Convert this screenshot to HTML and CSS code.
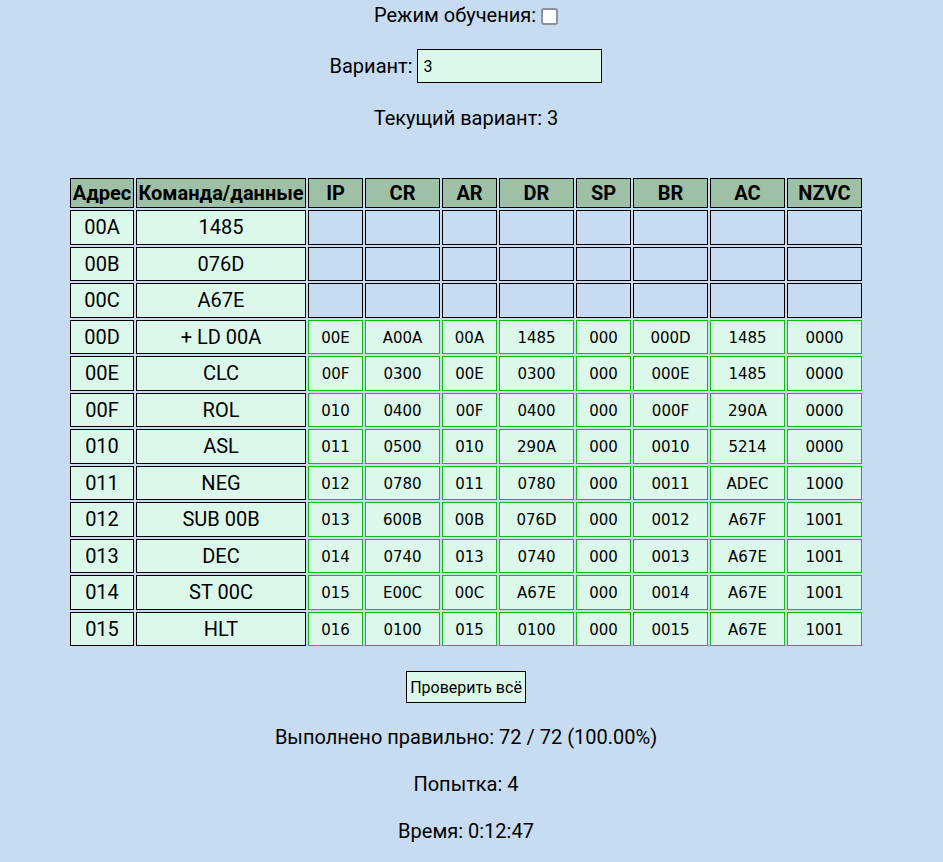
FILE: index.html
```html
<!DOCTYPE html>
<html lang="ru">
<head>
<meta charset="utf-8">
<title>БЭВМ</title>
<link rel="stylesheet" href="styles.css">
</head>
<body>
<div class="page">
  <p class="line mode">Режим обучения: <input type="checkbox" class="check"></p>
  <p class="line variant">Вариант: <input type="text" class="variant-input" value="3"></p>
  <p class="line current">Текущий вариант: 3</p>

  <table class="trace">
    <thead>
      <tr>
        <th><div class="h w-addr">Адрес</div></th>
        <th><div class="h w-cmd">Команда/данные</div></th>
        <th><div class="h w-s">IP</div></th>
        <th><div class="h w-l">CR</div></th>
        <th><div class="h w-s">AR</div></th>
        <th><div class="h w-l">DR</div></th>
        <th><div class="h w-s">SP</div></th>
        <th><div class="h w-l">BR</div></th>
        <th><div class="h w-l">AC</div></th>
        <th><div class="h w-l">NZVC</div></th>
      </tr>
    </thead>
    <tbody>
      <tr>
        <td class="txt"><div class="c">00A</div></td>
        <td class="txt"><div class="c">1485</div></td>
        <td class="empty"><div class="c"></div></td>
        <td class="empty"><div class="c"></div></td>
        <td class="empty"><div class="c"></div></td>
        <td class="empty"><div class="c"></div></td>
        <td class="empty"><div class="c"></div></td>
        <td class="empty"><div class="c"></div></td>
        <td class="empty"><div class="c"></div></td>
        <td class="empty"><div class="c"></div></td>
      </tr>
      <tr>
        <td class="txt"><div class="c">00B</div></td>
        <td class="txt"><div class="c">076D</div></td>
        <td class="empty"><div class="c"></div></td>
        <td class="empty"><div class="c"></div></td>
        <td class="empty"><div class="c"></div></td>
        <td class="empty"><div class="c"></div></td>
        <td class="empty"><div class="c"></div></td>
        <td class="empty"><div class="c"></div></td>
        <td class="empty"><div class="c"></div></td>
        <td class="empty"><div class="c"></div></td>
      </tr>
      <tr>
        <td class="txt"><div class="c">00C</div></td>
        <td class="txt"><div class="c">A67E</div></td>
        <td class="empty"><div class="c"></div></td>
        <td class="empty"><div class="c"></div></td>
        <td class="empty"><div class="c"></div></td>
        <td class="empty"><div class="c"></div></td>
        <td class="empty"><div class="c"></div></td>
        <td class="empty"><div class="c"></div></td>
        <td class="empty"><div class="c"></div></td>
        <td class="empty"><div class="c"></div></td>
      </tr>
      <tr>
        <td class="txt"><div class="c">00D</div></td>
        <td class="txt"><div class="c">+ LD 00A</div></td>
        <td class="ok"><div class="r">00E</div></td>
        <td class="ok"><div class="r">A00A</div></td>
        <td class="ok"><div class="r">00A</div></td>
        <td class="ok"><div class="r">1485</div></td>
        <td class="ok"><div class="r">000</div></td>
        <td class="ok"><div class="r">000D</div></td>
        <td class="ok"><div class="r">1485</div></td>
        <td class="ok"><div class="r">0000</div></td>
      </tr>
      <tr>
        <td class="txt"><div class="c">00E</div></td>
        <td class="txt"><div class="c">CLC</div></td>
        <td class="ok"><div class="r">00F</div></td>
        <td class="ok"><div class="r">0300</div></td>
        <td class="ok"><div class="r">00E</div></td>
        <td class="ok"><div class="r">0300</div></td>
        <td class="ok"><div class="r">000</div></td>
        <td class="ok"><div class="r">000E</div></td>
        <td class="ok"><div class="r">1485</div></td>
        <td class="ok"><div class="r">0000</div></td>
      </tr>
      <tr>
        <td class="txt"><div class="c">00F</div></td>
        <td class="txt"><div class="c">ROL</div></td>
        <td class="ok"><div class="r">010</div></td>
        <td class="ok"><div class="r">0400</div></td>
        <td class="ok"><div class="r">00F</div></td>
        <td class="ok"><div class="r">0400</div></td>
        <td class="ok"><div class="r">000</div></td>
        <td class="ok"><div class="r">000F</div></td>
        <td class="ok"><div class="r">290A</div></td>
        <td class="ok"><div class="r">0000</div></td>
      </tr>
      <tr>
        <td class="txt"><div class="c">010</div></td>
        <td class="txt"><div class="c">ASL</div></td>
        <td class="ok"><div class="r">011</div></td>
        <td class="ok"><div class="r">0500</div></td>
        <td class="ok"><div class="r">010</div></td>
        <td class="ok"><div class="r">290A</div></td>
        <td class="ok"><div class="r">000</div></td>
        <td class="ok"><div class="r">0010</div></td>
        <td class="ok"><div class="r">5214</div></td>
        <td class="ok"><div class="r">0000</div></td>
      </tr>
      <tr>
        <td class="txt"><div class="c">011</div></td>
        <td class="txt"><div class="c">NEG</div></td>
        <td class="ok"><div class="r">012</div></td>
        <td class="ok"><div class="r">0780</div></td>
        <td class="ok"><div class="r">011</div></td>
        <td class="ok"><div class="r">0780</div></td>
        <td class="ok"><div class="r">000</div></td>
        <td class="ok"><div class="r">0011</div></td>
        <td class="ok"><div class="r">ADEC</div></td>
        <td class="ok"><div class="r">1000</div></td>
      </tr>
      <tr>
        <td class="txt"><div class="c">012</div></td>
        <td class="txt"><div class="c">SUB 00B</div></td>
        <td class="ok"><div class="r">013</div></td>
        <td class="ok"><div class="r">600B</div></td>
        <td class="ok"><div class="r">00B</div></td>
        <td class="ok"><div class="r">076D</div></td>
        <td class="ok"><div class="r">000</div></td>
        <td class="ok"><div class="r">0012</div></td>
        <td class="ok"><div class="r">A67F</div></td>
        <td class="ok"><div class="r">1001</div></td>
      </tr>
      <tr>
        <td class="txt"><div class="c">013</div></td>
        <td class="txt"><div class="c">DEC</div></td>
        <td class="ok"><div class="r">014</div></td>
        <td class="ok"><div class="r">0740</div></td>
        <td class="ok"><div class="r">013</div></td>
        <td class="ok"><div class="r">0740</div></td>
        <td class="ok"><div class="r">000</div></td>
        <td class="ok"><div class="r">0013</div></td>
        <td class="ok"><div class="r">A67E</div></td>
        <td class="ok"><div class="r">1001</div></td>
      </tr>
      <tr>
        <td class="txt"><div class="c">014</div></td>
        <td class="txt"><div class="c">ST 00C</div></td>
        <td class="ok"><div class="r">015</div></td>
        <td class="ok"><div class="r">E00C</div></td>
        <td class="ok"><div class="r">00C</div></td>
        <td class="ok"><div class="r">A67E</div></td>
        <td class="ok"><div class="r">000</div></td>
        <td class="ok"><div class="r">0014</div></td>
        <td class="ok"><div class="r">A67E</div></td>
        <td class="ok"><div class="r">1001</div></td>
      </tr>
      <tr>
        <td class="txt"><div class="c">015</div></td>
        <td class="txt"><div class="c">HLT</div></td>
        <td class="ok"><div class="r">016</div></td>
        <td class="ok"><div class="r">0100</div></td>
        <td class="ok"><div class="r">015</div></td>
        <td class="ok"><div class="r">0100</div></td>
        <td class="ok"><div class="r">000</div></td>
        <td class="ok"><div class="r">0015</div></td>
        <td class="ok"><div class="r">A67E</div></td>
        <td class="ok"><div class="r">1001</div></td>
      </tr>
    </tbody>
  </table>

  <div class="actions"><button class="check-all" type="button">Проверить всё</button></div>

  <p class="line result">Выполнено правильно: 72 / 72 (100.00%)</p>
  <p class="line attempt">Попытка: 4</p>
  <p class="line time">Время: 0:12:47</p>
</div>
</body>
</html>
```

FILE: styles.css
```css
html, body {
  margin: 0;
  padding: 0;
  background: #c7dcf1;
}

body {
  font-family: Roboto, "Liberation Sans", Arial, sans-serif;
  font-size: 20px;
  color: #000;
}

.page {
  width: 932px;
  padding-top: 2px;
  text-align: center;
}

.line {
  margin: 0;
  line-height: 26px;
}

.check {
  appearance: none;
  -webkit-appearance: none;
  box-sizing: border-box;
  width: 17px;
  height: 17px;
  margin: 0;
  border: 2px solid #8f8f9d;
  border-radius: 3px;
  background: #fff;
  vertical-align: -3px;
}

.variant {
  margin-top: 21px;
  height: 34px;
  line-height: 34px;
}

.variant-input {
  box-sizing: border-box;
  width: 185px;
  height: 34px;
  margin: 0;
  padding: 0 5px;
  border: 1px solid #000;
  background: #dcf8ea;
  font-family: Roboto, "Liberation Sans", Arial, sans-serif;
  font-size: 16px;
  color: #000;
  vertical-align: top;
}

.current {
  margin-top: 22px;
}

.trace {
  margin: 45px auto 0;
  border-collapse: separate;
  border-spacing: 2px;
}

.trace th,
.trace td {
  padding: 0;
  text-align: center;
}

.trace th {
  border: 1px solid #000;
  background: #9fc0a6;
}

.h {
  height: 28px;
  line-height: 29px;
  font-weight: 700;
  white-space: nowrap;
  display: flex;
  justify-content: center;
}

.w-addr { width: 62px; }
.w-cmd { width: 168px; }
.w-s { width: 53px; }
.w-l { width: 73px; }

.trace td.txt {
  border: 1px solid #000;
  background: #dcf8ea;
}

.trace td.empty {
  border: 1px solid #000;
  background: transparent;
}

.c {
  height: 32.5px;
  line-height: 32.5px;
  white-space: nowrap;
}

.trace td.ok {
  border: 1px solid #10bb10;
  background: #dcf8ea;
}

.r {
  height: 32.5px;
  line-height: 34px;
  font-family: "DejaVu Sans", Verdana, sans-serif;
  font-size: 15px;
  white-space: nowrap;
}

.actions {
  margin-top: 23px;
}

.check-all {
  box-sizing: border-box;
  height: 32px;
  margin: 0;
  padding: 0 3px;
  border: 1px solid #000;
  border-radius: 0;
  background: #dcf8ea;
  font-family: Roboto, "Liberation Sans", Arial, sans-serif;
  font-size: 16px;
  color: #000;
  vertical-align: top;
}

.result {
  margin-top: 21px;
}

.attempt,
.time {
  margin-top: 21px;
}
```
